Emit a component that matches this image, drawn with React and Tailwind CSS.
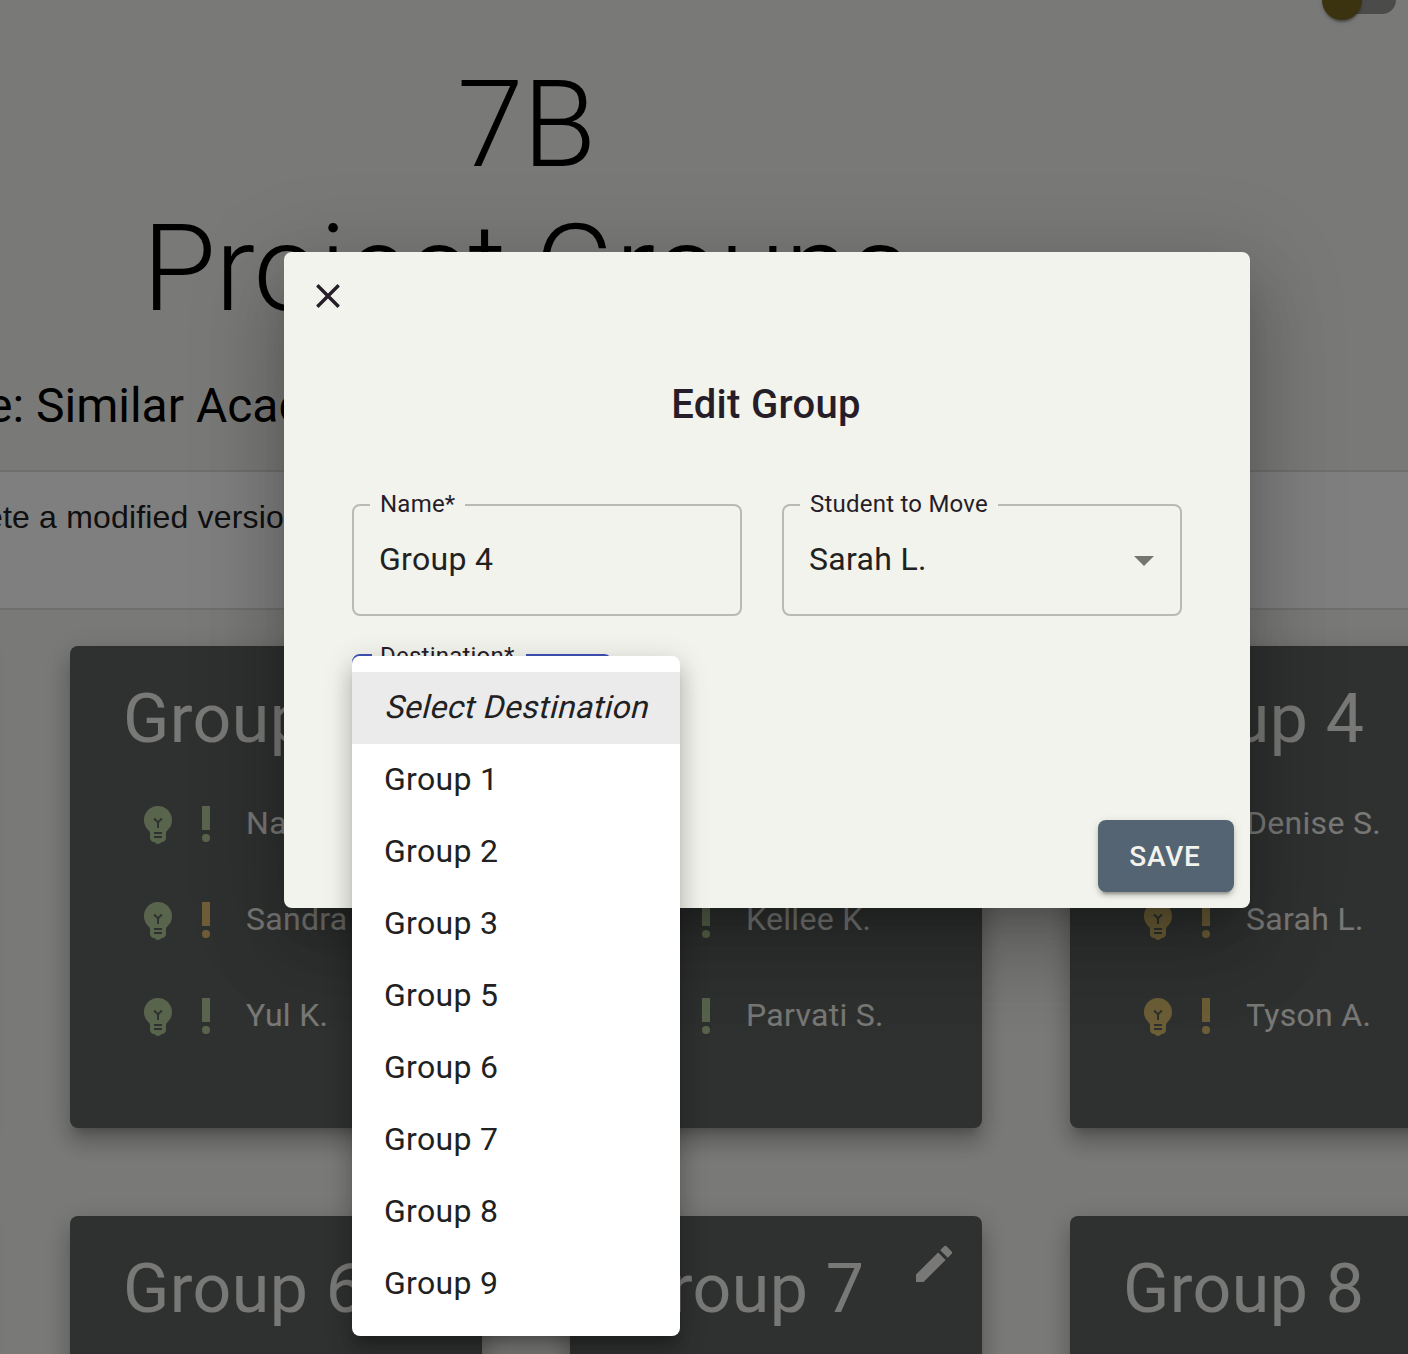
import { MdEdit, MdEmojiObjects, MdPriorityHigh } from "react-icons/md";

const GREEN = "text-[#b0cb98]";
const ORANGE = "text-[#dcbb70]";
const GOLD = "text-[#d9be6e]";

const topRow = [
  {
    name: "Group 2",
    students: [
      { name: "Nancy", bulb: GREEN, mark: GREEN },
      { name: "Sandra", bulb: GREEN, mark: ORANGE },
      { name: "Yul K.", bulb: GREEN, mark: GREEN },
    ],
  },
  {
    name: "Group 3",
    students: [
      { name: "Kim", bulb: GREEN, mark: GREEN },
      { name: "Kellee K.", bulb: GREEN, mark: GREEN },
      { name: "Parvati S.", bulb: GREEN, mark: GREEN },
    ],
  },
  {
    name: "Group 4",
    students: [
      { name: "Denise S.", bulb: GOLD, mark: GOLD },
      { name: "Sarah L.", bulb: GOLD, mark: GOLD },
      { name: "Tyson A.", bulb: GOLD, mark: GOLD },
    ],
  },
];

const bottomRow = [
  { name: "Group 6", students: [] },
  { name: "Group 7", students: [] },
  { name: "Group 8", students: [] },
];

const destinations = [1, 2, 3, 5, 6, 7, 8, 9];

function Card({ group }) {
  return (
    <div className="h-[482px] w-[412px] shrink-0 rounded-lg bg-[#5e6260] text-[#f0f0ec] shadow-[0_10px_10px_-6px_rgba(0,0,0,0.2),0_16px_20px_2px_rgba(0,0,0,0.14),0_6px_28px_4px_rgba(0,0,0,0.12)]">
      <div className="flex items-start justify-between pt-6 pr-6 pl-[53px]">
        <h3 className="mt-[7px] mb-px text-[68px] leading-[84px] tracking-[0.45px]">{group.name}</h3>
        <MdEdit className="size-12" />
      </div>
      <ul className="mt-[14px] flex flex-col">
        {group.students.map((s) => (
          <li key={s.name} className="flex h-24 items-center pl-16">
            <MdEmojiObjects className={"size-12 " + s.bulb} />
            <MdPriorityHigh className={"size-12 " + s.mark} />
            <span className="mb-0.5 ml-4 text-[32px] leading-12 tracking-[0.3px] whitespace-nowrap">
              {s.name}
            </span>
          </li>
        ))}
      </ul>
    </div>
  );
}

function CardRow({ groups }) {
  return (
    <div className="-ml-[430px] flex gap-[88px]">
      <div className="h-[482px] w-[412px] shrink-0 rounded-lg bg-[#5e6260] shadow-[0_10px_10px_-6px_rgba(0,0,0,0.2),0_16px_20px_2px_rgba(0,0,0,0.14),0_6px_28px_4px_rgba(0,0,0,0.12)]" />
      {groups.map((g) => (
        <Card key={g.name} group={g} />
      ))}
    </div>
  );
}

function Page() {
  return (
    <div className="h-[1354px] overflow-hidden bg-[#f3f3ef]">
      <div className="flex h-[53px] items-start justify-end pr-3">
        <div className="relative h-[14px] w-[60px] rounded-br-[14px] bg-[#979794]">
          <div className="absolute -top-5 -left-[14px] size-10 rounded-full bg-[#766420] shadow-[0_4px_2px_-2px_rgba(0,0,0,0.2),0_2px_2px_0_rgba(0,0,0,0.14),0_2px_6px_0_rgba(0,0,0,0.12)]" />
        </div>
      </div>
      <h1 className="w-[1052px] text-center text-[120px] leading-[144px] font-light tracking-[-1px] text-black">
        7B
        <br />
        Project Groups
      </h1>
      <h2 className="mt-[33px] -ml-[13px] h-[64px] text-5xl leading-[64px] whitespace-nowrap text-black">e: Similar Acade</h2>
      <div className="mt-8 h-[140px] border-y-2 border-[#dfdfdf] bg-white pt-[26px]">
        <p className="-ml-[15px] font-['Liberation_Sans',sans-serif] text-[32px] leading-[38px] tracking-[0.18px] whitespace-nowrap text-[#212121]">
          ete a modified versio
        </p>
      </div>
      <div className="mt-9 flex flex-col gap-[88px]">
        <CardRow groups={topRow} />
        <CardRow groups={bottomRow} />
      </div>
    </div>
  );
}

function Field({ label, value, arrow, width, focused }) {
  return (
    <fieldset
      className={
        "h-[124px] rounded-lg border-2 " +
        width +
        (focused ? " border-[#3f51b5] pl-[18px]" : " border-[#b9bab5] pl-4")
      }
    >
      <legend
        className={
          "h-[26px] text-2xl tracking-[0.23px] whitespace-nowrap text-[#271d28] " +
          (focused ? "pr-[11px] pl-2 leading-7" : "px-[10px] leading-6")
        }
      >
        {label}
      </legend>
      <div className="flex items-center justify-between pt-[17px] pr-[26px] pl-[9px]">
        <span className="text-[32px] leading-[48px] tracking-[0.3px] text-[#212121]">{value}</span>
        {arrow && (
          <svg className="mt-1 h-[10px] w-5" viewBox="0 0 20 10" fill="#757572">
            <path d="M0 0h20L10 10z" />
          </svg>
        )}
      </div>
    </fieldset>
  );
}

function Dialog() {
  return (
    <div
      role="dialog"
      className="flex h-[656px] w-[966px] flex-col rounded-lg bg-[#f2f3ec] shadow-[0_22px_30px_-14px_rgba(0,0,0,0.2),0_48px_76px_6px_rgba(0,0,0,0.14),0_18px_92px_16px_rgba(0,0,0,0.12)]"
    >
      <button className="mt-8 ml-8 size-6" aria-label="Close">
        <svg viewBox="0 0 24 24" className="size-6" fill="none" stroke="#271d28" strokeWidth="3.4">
          <path d="M1.3 1.3l21.4 21.4M22.7 1.3L1.3 22.7" />
        </svg>
      </button>
      <h2 className="mt-[65px] pr-0.5 text-center text-[40px] leading-[64px] font-medium tracking-[0.3px] text-[#271d28]">
        Edit Group
      </h2>
      <div className="mt-[55px] flex gap-10 pl-[68px]">
        <Field label="Name*" value="Group 4" width="w-[390px]" />
        <Field label="Student to Move" value="Sarah L." width="w-[400px]" arrow />
      </div>
      <div className="mt-[26px] -mb-4 flex pl-[68px]">
        <Field label="Destination*" value="" width="w-[260px]" focused />
      </div>
      <div className="mt-auto flex justify-end pr-4 pb-4">
        <button className="h-[72px] w-[136px] rounded-lg bg-[#546473] pt-0.5 pr-0.5 text-[28px] font-medium tracking-[0.8px] text-[#f2f3ec] shadow-[0_6px_2px_-4px_rgba(0,0,0,0.2),0_4px_4px_0_rgba(0,0,0,0.14),0_2px_10px_0_rgba(0,0,0,0.12)]">
          SAVE
        </button>
      </div>
    </div>
  );
}

function Menu() {
  return (
    <ul className="w-[328px] rounded-lg bg-white py-4 text-[32px] leading-[70px] tracking-[0.3px] text-[#212121] shadow-[0_10px_10px_-6px_rgba(0,0,0,0.2),0_16px_20px_2px_rgba(0,0,0,0.14),0_6px_28px_4px_rgba(0,0,0,0.12)]">
      <li className="h-[72px] bg-[#ebebeb] pl-8 whitespace-nowrap">
        <em className="inline-block origin-[0_46px] -skew-x-[14deg] not-italic">Select Destination</em>
      </li>
      {destinations.map((n) => (
        <li key={n} className="h-[72px] pl-8">
          Group {n}
        </li>
      ))}
    </ul>
  );
}

export default function App() {
  return (
    <div className="relative h-[1354px] w-[1408px] overflow-hidden font-[Roboto,sans-serif]">
      <Page />
      <div className="absolute inset-0 bg-black/50" />
      <div className="absolute top-[252px] left-[284px]">
        <Dialog />
      </div>
      <div className="absolute top-[656px] left-[352px]">
        <Menu />
      </div>
    </div>
  );
}
